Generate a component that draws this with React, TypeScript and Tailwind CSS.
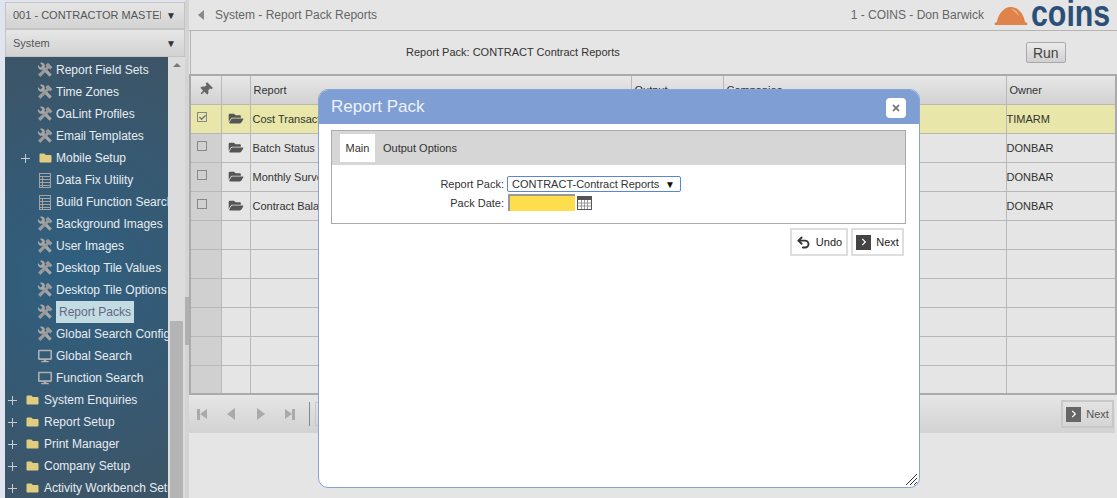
import { FaFolder, FaFolderOpen, FaDesktop, FaThumbtack, FaChevronRight, FaTimes, FaCheck } from "react-icons/fa";
import { Undo2 } from "lucide-react";

// crossed wrench and hammer used on most menu rows
const ToolsIcon = () => (
  <svg viewBox="0 0 16 16" className="w-[16px] h-[16px]">
    <path d="M1 3 3.5 5.5 5.5 3.5 3 1C5 0 7.5 1 7.8 3.4 7.9 4.2 7.8 4.8 7.5 5.3L14.8 12.6 12.6 14.8 5.3 7.5C3 8.6.2 6 1 3Z" fill="#a6a6a6" />
    <path d="M8.3 3.2 11 .8 15.5 5.3 13.2 7.6 11.9 6.3 3.4 15 1 12.6 9.6 4.5Z" fill="#9a9a9a" />
  </svg>
);

const TableIcon = () => (
  <svg viewBox="0 0 12 15" className="w-[12px] h-[15px] text-[#a3a3a3]" fill="none" stroke="currentColor" strokeWidth="1">
    <rect x="0.5" y="0.5" width="11" height="14" />
    <path d="M0.5 3.5h11M0.5 6.5h11M0.5 9.5h11M0.5 12.5h11M3.5 3.5v11" />
  </svg>
);

const PlusIcon = () => (
  <svg viewBox="0 0 9 9" className="w-[9px] h-[9px]" stroke="#c4ccd2" strokeWidth="1">
    <path d="M0 4.5h9M4.5 0v9" />
  </svg>
);

const CalendarIcon = () => (
  <svg viewBox="0 0 15 14" className="w-[15px] h-[14px]">
    <rect width="15" height="14" fill="#555" />
    <path d="M1 4h13v9H1z" fill="#fff" />
    <path d="M1 7h13M1 10h13M4.5 4v9M7.5 4v9M10.5 4v9" stroke="#999" strokeWidth="1" />
  </svg>
);

type NavItem = { label: string; icon: "tools" | "table" | "monitor" | "folder"; level: number; plus?: boolean; active?: boolean };

const navItems: NavItem[] = [
  { label: "Report Field Sets", icon: "tools", level: 2 },
  { label: "Time Zones", icon: "tools", level: 2 },
  { label: "OaLint Profiles", icon: "tools", level: 2 },
  { label: "Email Templates", icon: "tools", level: 2 },
  { label: "Mobile Setup", icon: "folder", level: 2, plus: true },
  { label: "Data Fix Utility", icon: "table", level: 2 },
  { label: "Build Function Search", icon: "table", level: 2 },
  { label: "Background Images", icon: "tools", level: 2 },
  { label: "User Images", icon: "tools", level: 2 },
  { label: "Desktop Tile Values", icon: "tools", level: 2 },
  { label: "Desktop Tile Options", icon: "tools", level: 2 },
  { label: "Report Packs", icon: "tools", level: 2, active: true },
  { label: "Global Search Config", icon: "tools", level: 2 },
  { label: "Global Search", icon: "monitor", level: 2 },
  { label: "Function Search", icon: "monitor", level: 2 },
  { label: "System Enquiries", icon: "folder", level: 1, plus: true },
  { label: "Report Setup", icon: "folder", level: 1, plus: true },
  { label: "Print Manager", icon: "folder", level: 1, plus: true },
  { label: "Company Setup", icon: "folder", level: 1, plus: true },
  { label: "Activity Workbench Setup", icon: "folder", level: 1, plus: true },
];

const rows = [
  { name: "Cost Transaction", owner: "TIMARM", checked: true },
  { name: "Batch Status Report", owner: "DONBAR" },
  { name: "Monthly Survey", owner: "DONBAR" },
  { name: "Contract Balance", owner: "DONBAR" },
  { name: "", owner: "" },
  { name: "", owner: "" },
  { name: "", owner: "" },
  { name: "", owner: "" },
  { name: "", owner: "" },
  { name: "", owner: "" },
];

const NavRow = ({ item }: { item: NavItem }) => (
  <div className={`h-[22px] flex items-center whitespace-nowrap ${item.level === 2 ? "pl-[16px]" : "pl-[3px]"}`}>
    <span className="w-[15px] shrink-0 flex items-center">{item.plus && <PlusIcon />}</span>
    <span className="w-[18px] shrink-0 flex justify-center">
      {item.icon === "tools" && <ToolsIcon />}
      {item.icon === "folder" && <FaFolder className="w-[13px] h-[12px] text-[#e0cd80]" />}
      {item.icon === "table" && <TableIcon />}
      {item.icon === "monitor" && <FaDesktop className="w-[14px] h-[14px] text-[#b0b0b0]" />}
    </span>
    <span
      className={`shrink-0 text-[12px] leading-[22px] ${item.level === 2 ? "ml-[2px]" : "ml-[3px]"} ${item.active ? "bg-[#c3dbe3] text-[#5f6a80] px-[3px]" : "text-[#e6ecf1]"}`}
    >
      {item.label}
    </span>
  </div>
);

const NextButton = ({ dim }: { dim?: boolean }) => (
  <div className={`h-[28px] w-[53px] border-2 flex items-center justify-center gap-[5px] text-[11px] ${dim ? "border-[#c8c8c8] text-[#555]" : "border-[#dedede] text-[#222] bg-white"}`}>
    <span className={`w-[15px] h-[15px] flex items-center justify-center ${dim ? "bg-[#666]" : "bg-[#444]"}`}>
      <FaChevronRight className="w-[8px] h-[8px] text-white" />
    </span>
    Next
  </div>
);

export default function App() {
  return (
    <div className="relative w-[1117px] h-[498px] overflow-hidden flex bg-[#e0e4ee] text-[11px] font-['Liberation_Sans',Arial,sans-serif]">
      {/* SIDEBAR */}
      <div className="w-[180px] ml-[5px] flex flex-col shrink-0">
        <div className="h-[29px] pt-[2px] bg-[#e0e4ee]">
          <div className="h-[27px] border border-[#c4c4c4] bg-gradient-to-b from-[#e6e6e6] to-[#d2d2d2] flex items-center justify-between pl-[7px] pr-[8px] text-[#555]">
            <span className="w-[148px] overflow-hidden whitespace-nowrap text-[11px]">001 - CONTRACTOR MASTER</span>
            <span className="text-[10px] text-[#333]">▼</span>
          </div>
        </div>
        <div className="h-[28px] border border-[#c4c4c4] bg-gradient-to-b from-[#e6e6e6] to-[#d2d2d2] flex items-center justify-between pl-[7px] pr-[8px] text-[#555]">
          <span className="text-[11px]">System</span>
          <span className="text-[10px] text-[#333]">▼</span>
        </div>
        <div className="flex-1 flex min-h-0">
          <div className="w-[163px] overflow-hidden pt-[2px] bg-[radial-gradient(circle_at_40%_50%,#2f5f80,#3d5466)]">
            {navItems.map((item) => (
              <NavRow key={item.label} item={item} />
            ))}
          </div>
          <div className="w-[17px] bg-[#dcdcdc] flex flex-col items-center pt-[6px]">
            <span className="w-0 h-0 border-x-[4px] border-x-transparent border-b-[4px] border-b-[#777]" />
            <span className="w-[13px] h-[178px] mt-[254px] bg-[#b4b4b4]" />
          </div>
        </div>
      </div>

      {/* SPLITTER */}
      <div className="w-[4px] bg-[#d4d4d4] flex flex-col shrink-0">
        <span className="h-[48px] mt-[297px] bg-[#b0b0b0]" />
      </div>

      {/* MAIN */}
      <div className="flex-1 flex flex-col bg-[#e5e5e5] min-w-0">
        <div className="h-[31px] flex items-center border-b border-[#b4b4b4] text-[12px] text-[#666] shrink-0">
          <span className="ml-[9px] w-0 h-0 border-y-[5px] border-y-transparent border-r-[6px] border-r-[#888]" />
          <span className="ml-[11px]">System - Report Pack Reports</span>
          <span className="ml-auto">1 - COINS - Don Barwick</span>
          <svg viewBox="0 0 34 20" className="w-[34px] h-[20px] ml-[10px]">
            <path d="M1 20c-1-1 0-3 2-3 1-7 6-15 14-15s13 8 14 15c2 0 3 2 2 3z" fill="#e0834a" />
            <path d="M17 4c4 0 7 3 8 7-3-3-5-5-8-7z" fill="#f0b08a" />
          </svg>
          <span className="ml-[3px] mr-[5px] w-[81px] text-[37px] leading-[31px] font-bold text-[#2c4f78] origin-left scale-x-[.82] -mt-[3px]">coins</span>
        </div>

        <div className="h-[43px] shrink-0 ml-[1px] border-l border-[#b4b4b4] flex items-center">
          <span className="ml-[215px] text-[11px] text-[#333]">Report Pack: CONTRACT Contract Reports</span>
          <button className="ml-[406px] h-[21px] w-[40px] border border-[#a8a8a8] rounded-[2px] bg-gradient-to-b from-[#ececec] to-[#d0d0d0] text-[14px] text-[#444]">
            Run
          </button>
        </div>

        <table className="w-[926px] table-fixed border-collapse border-2 border-[#aaa] shrink-0 text-[11px] text-[#333]">
          <colgroup>
            <col className="w-[31px]" />
            <col className="w-[29px]" />
            <col className="w-[381px]" />
            <col className="w-[92px]" />
            <col className="w-[283px]" />
            <col className="w-[110px]" />
          </colgroup>
          <thead>
            <tr className="h-[29px] bg-gradient-to-b from-[#e8e8e8] to-[#d2d2d2] text-left font-normal">
              <th className="border border-[#b8b8b8] font-normal">
                <FaThumbtack className="w-[13px] h-[13px] text-[#666] mx-auto rotate-45" />
              </th>
              <th className="border border-[#b8b8b8] font-normal" />
              <th className="border border-[#b8b8b8] font-normal pl-[3px]">Report</th>
              <th className="border border-[#b8b8b8] font-normal pl-[3px]">Output</th>
              <th className="border border-[#b8b8b8] font-normal pl-[3px]">Companies</th>
              <th className="border border-[#b8b8b8] font-normal pl-[3px]">Owner</th>
            </tr>
          </thead>
          <tbody>
            {rows.map((row, i) => (
              <tr key={i} className={`h-[29px] ${row.checked ? "bg-[#e8e6a8]" : ""}`}>
                <td className={`border border-[#b8b8b8] ${row.checked ? "" : "bg-[#d0d0d0]"}`}>
                  {row.name && (
                    <span className="w-[10px] h-[10px] ml-[6px] mb-[3px] border border-[#888] flex items-center justify-center">
                      {row.checked && <FaCheck className="w-[7px] h-[7px] text-[#777]" />}
                    </span>
                  )}
                </td>
                <td className="border border-[#b8b8b8]">
                  {row.name && <FaFolderOpen className="w-[16px] h-[13px] text-[#555] mx-auto" />}
                </td>
                <td className="border border-[#b8b8b8] pl-[2px] pt-[2px]">{row.name}</td>
                <td className="border border-[#b8b8b8]" />
                <td className="border border-[#b8b8b8]" />
                <td className="border border-[#b8b8b8] pt-[2px]">{row.owner}</td>
              </tr>
            ))}
          </tbody>
        </table>

        <div className="h-[38px] w-[926px] shrink-0 bg-gradient-to-b from-[#e6e6e6] to-[#d2d2d2] flex items-center">
          <span className="ml-[8px] flex items-center">
            <span className="w-[3px] h-[11px] bg-[#aaa]" />
            <span className="w-0 h-0 border-y-[5px] border-y-transparent border-r-[7px] border-r-[#aaa]" />
          </span>
          <span className="ml-[20px] w-0 h-0 border-y-[6px] border-y-transparent border-r-[8px] border-r-[#aaa]" />
          <span className="ml-[22px] w-0 h-0 border-y-[6px] border-y-transparent border-l-[8px] border-l-[#aaa]" />
          <span className="ml-[20px] flex items-center">
            <span className="w-0 h-0 border-y-[5px] border-y-transparent border-l-[7px] border-l-[#aaa]" />
            <span className="w-[3px] h-[11px] bg-[#aaa]" />
          </span>
          <span className="ml-[14px] w-[1px] h-[24px] bg-[#888]" />
          <span className="ml-[5px] w-[8px] h-[24px] border border-[#c8c8c8]" />
          <span className="ml-auto mr-[1px]">
            <NextButton dim />
          </span>
        </div>
      </div>

      {/* MODAL */}
      <div className="absolute left-[318px] top-[89px] w-[602px] h-[399px] bg-white border border-[#8aa2d4] rounded-[10px] overflow-hidden flex flex-col">
        <div className="h-[34px] shrink-0 bg-[#7f9fd4] flex items-center justify-between pl-[12px] pr-[13px]">
          <span className="text-[17px] text-[#eef2f8]">Report Pack</span>
          <span className="w-[20px] h-[20px] mt-[1px] bg-white rounded-[4px] flex items-center justify-center">
            <FaTimes className="w-[10px] h-[10px] text-[#777]" />
          </span>
        </div>
        <div className="ml-[12px] mr-[13px] mt-[6px] h-[94px] border border-[#aaa] flex flex-col">
          <div className="h-[34px] bg-[#d6d6d6] flex items-center pl-[8px] text-[#333]">
            <span className="h-[28px] w-[35px] bg-white flex items-center justify-center">Main</span>
            <span className="ml-[8px]">Output Options</span>
          </div>
          <div className="flex pt-[11px] text-[11px] text-[#333]">
            <div className="w-[172px] text-right">
              <div className="h-[16px] leading-[16px]">Report Pack:</div>
              <div className="h-[16px] leading-[16px] mt-[3px]">Pack Date:</div>
            </div>
            <div className="ml-[3px]">
              <div className="w-[174px] h-[16px] border border-[#5b85d8] rounded-[2px] flex items-center justify-between px-[4px] text-[11px]">
                CONTRACT-Contract Reports
                <span className="text-[10px] mr-[1px] text-[#111]">▼</span>
              </div>
              <div className="mt-[2px] flex items-center ml-[1px]">
                <span className="w-[67px] h-[17px] bg-[#fede4c] border-l-2 border-t-2 border-[#999]" />
                <span className="ml-[2px]">
                  <CalendarIcon />
                </span>
              </div>
            </div>
          </div>
        </div>
        <div className="flex justify-end gap-[3px] mt-[4px] mr-[15px]">
          <div className="h-[28px] w-[58px] border-2 border-[#dedede] flex items-center justify-center gap-[5px] text-[11px] text-[#222]">
            <Undo2 className="w-[15px] h-[15px] text-[#333]" strokeWidth={3} />
            Undo
          </div>
          <NextButton />
        </div>
        <svg viewBox="0 0 12 12" className="absolute right-[2px] bottom-[2px] w-[12px] h-[12px]" stroke="#333" strokeWidth="1">
          <path d="M1 12 12 1M5 12l7-7M9 12l3-3" />
        </svg>
      </div>
    </div>
  );
}
